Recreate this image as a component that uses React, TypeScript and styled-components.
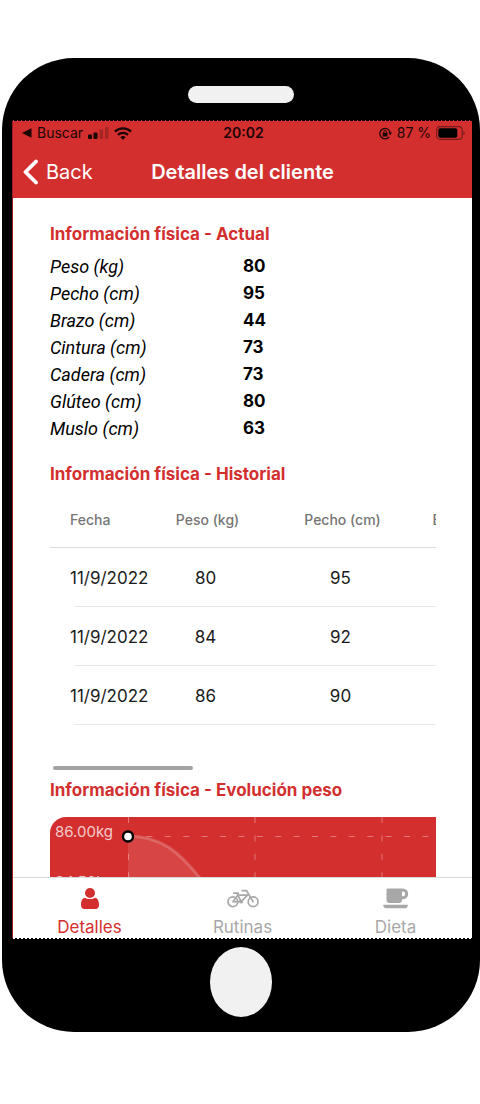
import React from "react";
import styled, { createGlobalStyle } from "styled-components";

const RED = "#d32f2f";

const GlobalStyle = createGlobalStyle`
  *, *::before, *::after { box-sizing: border-box; }
  body {
    margin: 0;
    background: #fff;
    color: #000;
    font-family: Inter, "Liberation Sans", sans-serif;
  }
`;

const Page = styled.main`
  height: 100vh;
  padding: 58px 0 72px 2px;
`;

const Phone = styled.div`
  display: flex;
  flex-direction: column;
  height: 100%;
  padding: 28px 8px 15px 11px;
  border-radius: 72px;
  background: #000;
`;

const Speaker = styled.div`
  align-self: center;
  flex: none;
  width: 106px;
  height: 17px;
  margin: 0 3px 17px 0;
  border-radius: 9px;
  background: #f1f1f1;
`;

const HomeButton = styled.button`
  align-self: center;
  flex: none;
  width: 62px;
  height: 70px;
  margin: 8px 3px 0 0;
  padding: 0;
  border: 0;
  border-radius: 50%;
  background: #f1f1f1;
`;

const Perforation = styled.div<{ $color: string; $dot: number }>`
  flex: none;
  height: 1px;
  background: repeating-linear-gradient(
    90deg,
    ${(p) => p.$color} 0 ${(p) => p.$dot}px,
    #000 ${(p) => p.$dot}px 4px
  );
`;

const Screen = styled.div`
  flex: 1;
  min-height: 0;
  display: flex;
  flex-direction: column;
  background: #fff;
  box-shadow: -1px 0 0 #a01c24;
`;

const Header = styled.header`
  flex: none;
  background: ${RED};
`;

const StatusBar = styled.div`
  display: grid;
  grid-template-columns: 1fr auto 1fr;
  align-items: center;
  height: 24px;
  padding: 0 7px 0 9px;
  font-size: 14px;
  line-height: 24px;
  color: #1c0505;
`;

const StatusGroup = styled.div<{ $end?: boolean }>`
  display: flex;
  align-items: center;
  justify-content: ${(p) => (p.$end ? "flex-end" : "flex-start")};
  gap: 5px;
  white-space: nowrap;
`;

const Clock = styled.time`
  font-weight: 600;
`;

const NavBar = styled.div`
  display: grid;
  grid-template-columns: 1fr auto 1fr;
  align-items: center;
  height: 53px;
  padding: 0 10px;
`;

const BackButton = styled.button`
  display: flex;
  align-items: center;
  gap: 7px;
  padding: 0;
  border: 0;
  background: none;
  color: #fff;
  font: 400 20px/24px Inter, sans-serif;
`;

const Title = styled.h1`
  margin: 0;
  font-size: 20px;
  line-height: 24px;
  font-weight: 600;
  color: #fff;
`;

const Body = styled.div`
  flex: 1;
  min-height: 0;
  overflow: hidden;
  padding: 24px 36px 0 37px;
`;

const Heading = styled.h2`
  margin: 0;
  font-size: 17px;
  line-height: 24px;
  font-weight: 700;
  color: ${RED};
`;

const Measures = styled.dl`
  margin: 7px 0 20px;
`;

const Measure = styled.div`
  display: flex;
  font-size: 17px;
  line-height: 27px;
`;

const MeasureName = styled.dt`
  width: 193px;
  font-family: Roboto, "Liberation Sans", sans-serif;
  font-size: 18px;
  font-style: italic;
`;

const MeasureValue = styled.dd`
  margin: 0;
  font-weight: 700;
`;

const TableScroller = styled.div`
  margin-top: 6px;
  padding-bottom: 41px;
  overflow: hidden;
`;

const Table = styled.table`
  width: 478px;
  table-layout: fixed;
  border-collapse: separate;
  border-spacing: 0;
`;

const HeadCell = styled.th<{ $width: number; $start?: boolean }>`
  width: ${(p) => p.$width}px;
  height: 56px;
  padding: ${(p) => (p.$start ? "0 0 0 20px" : "0")};
  border-bottom: 1px solid #dcdcdc;
  text-align: ${(p) => (p.$start ? "left" : "center")};
  font-size: 14px;
  font-weight: 500;
  color: #757575;
  white-space: nowrap;
`;

const Cell = styled.td<{ $start?: boolean }>`
  height: 59px;
  padding: ${(p) => (p.$start ? "0 0 0 20px" : "0 4px 0 0")};
  text-align: ${(p) => (p.$start ? "left" : "center")};
  font-size: 17px;
  color: #1b1b1b;
  white-space: nowrap;
  background: linear-gradient(#e8e8e8, #e8e8e8) right bottom no-repeat;
  background-size: ${(p) => (p.$start ? "calc(100% - 24px)" : "100%")} 1px;
`;

const ScrollThumb = styled.div`
  width: 140px;
  height: 4px;
  margin: 0 0 8px 3px;
  border-radius: 2px;
  background: #a3a3a3;
`;

const ChartClip = styled.div`
  margin-top: 15px;
  overflow: hidden;
  border-radius: 16px 0 0 16px;
  background: ${RED};
`;

const Chart = styled.svg`
  display: block;
  font: 400 15px Inter, sans-serif;
`;

const TabBar = styled.nav`
  flex: none;
  display: flex;
  height: 61px;
  border-top: 1px solid #d8d8d8;
  background: #fff;
`;

const Tab = styled.button<{ $active?: boolean }>`
  flex: 1;
  display: flex;
  flex-direction: column;
  align-items: center;
  gap: 8px;
  padding: 9px 0 0;
  border: 0;
  background: none;
  color: ${(p) => (p.$active ? RED : "#a8a8a8")};
  font: 400 17px/20px Inter, sans-serif;
`;

const TabIcon = styled.span`
  display: flex;
  align-items: center;
  justify-content: center;
  height: 22px;
`;

const measures: [string, number][] = [
  ["Peso (kg)", 80],
  ["Pecho (cm)", 95],
  ["Brazo (cm)", 44],
  ["Cintura (cm)", 73],
  ["Cadera (cm)", 73],
  ["Glúteo (cm)", 80],
  ["Muslo (cm)", 63],
];

const history = [
  { fecha: "11/9/2022", peso: 80, pecho: 95 },
  { fecha: "11/9/2022", peso: 84, pecho: 92 },
  { fecha: "11/9/2022", peso: 86, pecho: 90 },
];

const SignalIcon = () => (
  <svg width="21" height="14" viewBox="0 0 21 14" fill="#1c0505" aria-hidden="true">
    <rect x="0" y="8.5" width="4" height="4.5" rx="1" />
    <rect x="5.5" y="6.5" width="4" height="6.5" rx="1" />
    <rect x="11.5" y="3.5" width="3.5" height="9.5" rx="1" opacity=".25" />
    <rect x="17" y="1" width="3.5" height="12" rx="1" opacity=".25" />
  </svg>
);

const WifiIcon = () => (
  <svg width="18" height="13" viewBox="0 0 18 13" fill="none" stroke="#1c0505" strokeWidth="2.3" aria-hidden="true">
    <path d="M.9 4.6a11.6 11.6 0 0 1 16.2 0" />
    <path d="M4 7.9a7.2 7.2 0 0 1 10 0" />
    <path d="M9 12.8 6.3 10.2a4 4 0 0 1 5.4 0Z" fill="#1c0505" stroke="none" />
  </svg>
);

const LockIcon = () => (
  <svg width="13" height="13" viewBox="0 0 13 13" fill="none" stroke="#1c0505" aria-hidden="true">
    <path d="M10.2 9.8A5.2 5.2 0 1 1 11.2 5.6" strokeWidth="1.3" />
    <path d="M9.4 5.6H13l-1.8 2.6Z" fill="#1c0505" stroke="none" />
    <rect x="3.7" y="5.7" width="4.8" height="3.7" rx=".5" fill="#1c0505" stroke="none" />
    <path d="M4.8 6V4.7a1.3 1.3 0 0 1 2.6 0V6" strokeWidth=".9" />
  </svg>
);

const BatteryIcon = () => (
  <svg width="29" height="14" viewBox="0 0 29 14" aria-hidden="true">
    <rect x=".6" y=".6" width="25.6" height="12.8" rx="3.4" fill="none" stroke="#1c0505" strokeOpacity=".5" strokeWidth="1.1" />
    <rect x="2.3" y="2.3" width="19" height="9.4" rx="1.8" fill="#000" />
    <path d="M27.4 4.9v4.2c1.7-.7 1.7-3.5 0-4.2Z" fill="#1c0505" opacity=".5" />
  </svg>
);

const PersonIcon = () => (
  <svg width="18" height="21" viewBox="0 0 18 21" fill="currentColor" aria-hidden="true">
    <circle cx="9" cy="5" r="5" />
    <path d="M4 9.7C1.1 10 0 13.2 0 16.9 0 19.3 1.4 21 3.5 21h11c2.1 0 3.5-1.7 3.5-4.1 0-3.7-1.1-6.9-4-7.2A7.6 7.6 0 0 1 9 11.1a7.6 7.6 0 0 1-5-1.4Z" />
  </svg>
);

const BikeIcon = () => (
  <svg width="32" height="19" viewBox="0 0 32 19" fill="none" stroke="currentColor" strokeWidth="1.7" strokeLinecap="round" strokeLinejoin="round" aria-hidden="true">
    <circle cx="5.9" cy="12.7" r="4.9" />
    <circle cx="26.1" cy="12.7" r="4.9" />
    <path d="M5.9 12.7 10.7 6.2 20.7 5.8 14.2 12.7H5.9M14.2 12.7 9.8 4.2M6.8 4.2h4.6M26.1 12.7 19.6 1.7h-4.3" />
    <circle cx="14.2" cy="12.7" r="1" fill="currentColor" />
  </svg>
);

const CupIcon = () => (
  <svg width="26" height="21" viewBox="0 0 26 21" fill="currentColor" aria-hidden="true">
    <path
      fillRule="evenodd"
      d="M4.5.5H19.8a5.2 5.2 0 0 1 0 10.800H19V12a3 3 0 0 1-3 3H6.5a3 3 0 0 1-3-3V1.5a1 1 0 0 1 1-1ZM19 3.6v4.6h.9a2.3 2.3 0 0 0 0-4.6Z"
    />
    <path d="M.6 16.700H24.400c.5 0 .6.3.5.7-.5 1.900-1.600 2.900-3.200 2.900H3.700C2 20.300.8 19.300.1 17.400c-.1-.4.1-.7.5-.7Z" />
  </svg>
);

const WeightChart = () => (
  <Chart width="540" height="220" role="img" aria-label="Evolución del peso">
    <path d="M78 19C112 19 130 36 150 61S182 108 204 118 290 170 332 170V220H78Z" fill="#fff" fillOpacity=".11" />
    <g stroke="#fff" strokeOpacity=".35" strokeDasharray="6 12.4">
      <path d="M78.5 0V200M205 0V200M332 0V200" />
      <path d="M78 19.5H520" />
    </g>
    <path d="M78 19C112 19 130 36 150 61S182 108 204 118 290 170 332 170" fill="none" stroke="#fff" strokeOpacity=".2" strokeWidth="3" />
    <circle cx="78" cy="19.5" r="5" fill="#fff" stroke="#000" strokeWidth="2.4" />
    <g fill="#fff" fillOpacity=".75">
      <text x="5" y="20">86.00kg</text>
      <text x="5" y="70">84.50kg</text>
    </g>
  </Chart>
);

export default function App() {
  return (
    <>
      <GlobalStyle />
      <Page>
        <Phone>
          <Speaker />
          <Perforation $color={RED} $dot={1} />
          <Screen>
            <Header>
              <StatusBar>
                <StatusGroup>
                  <svg width="10" height="10" viewBox="0 0 10 10" aria-hidden="true">
                    <path d="M0 5 9.5.3v9.4Z" fill="#1c0505" />
                  </svg>
                  <span>Buscar</span>
                  <SignalIcon />
                  <WifiIcon />
                </StatusGroup>
                <Clock>20:02</Clock>
                <StatusGroup $end>
                  <LockIcon />
                  <span>87 %</span>
                  <BatteryIcon />
                </StatusGroup>
              </StatusBar>
              <NavBar>
                <BackButton type="button">
                  <svg width="16" height="26" viewBox="0 0 16 26" fill="none" stroke="#fff" strokeWidth="3.8" strokeLinecap="round" strokeLinejoin="round" aria-hidden="true">
                    <path d="M13 2.5 2.5 13 13 23.5" />
                  </svg>
                  Back
                </BackButton>
                <Title>Detalles del cliente</Title>
              </NavBar>
            </Header>
            <Body>
              <Heading>Información física - Actual</Heading>
              <Measures>
                {measures.map(([name, value]) => (
                  <Measure key={name}>
                    <MeasureName>{name}</MeasureName>
                    <MeasureValue>{value}</MeasureValue>
                  </Measure>
                ))}
              </Measures>
              <Heading>Información física - Historial</Heading>
              <TableScroller>
                <Table>
                  <thead>
                    <tr>
                      <HeadCell $width={90} $start>Fecha</HeadCell>
                      <HeadCell $width={135}>Peso (kg)</HeadCell>
                      <HeadCell $width={135}>Pecho (cm)</HeadCell>
                      <HeadCell $width={118}>Brazo (cm)</HeadCell>
                    </tr>
                  </thead>
                  <tbody>
                    {history.map((row) => (
                      <tr key={row.peso}>
                        <Cell $start>{row.fecha}</Cell>
                        <Cell>{row.peso}</Cell>
                        <Cell>{row.pecho}</Cell>
                        <Cell />
                      </tr>
                    ))}
                  </tbody>
                </Table>
              </TableScroller>
              <ScrollThumb />
              <Heading>Información física - Evolución peso</Heading>
              <ChartClip>
                <WeightChart />
              </ChartClip>
            </Body>
            <TabBar>
              <Tab type="button" $active>
                <TabIcon><PersonIcon /></TabIcon>
                Detalles
              </Tab>
              <Tab type="button">
                <TabIcon><BikeIcon /></TabIcon>
                Rutinas
              </Tab>
              <Tab type="button">
                <TabIcon><CupIcon /></TabIcon>
                Dieta
              </Tab>
            </TabBar>
          </Screen>
          <Perforation $color="#fff" $dot={2} />
          <HomeButton type="button" aria-label="Inicio" />
        </Phone>
      </Page>
    </>
  );
}
